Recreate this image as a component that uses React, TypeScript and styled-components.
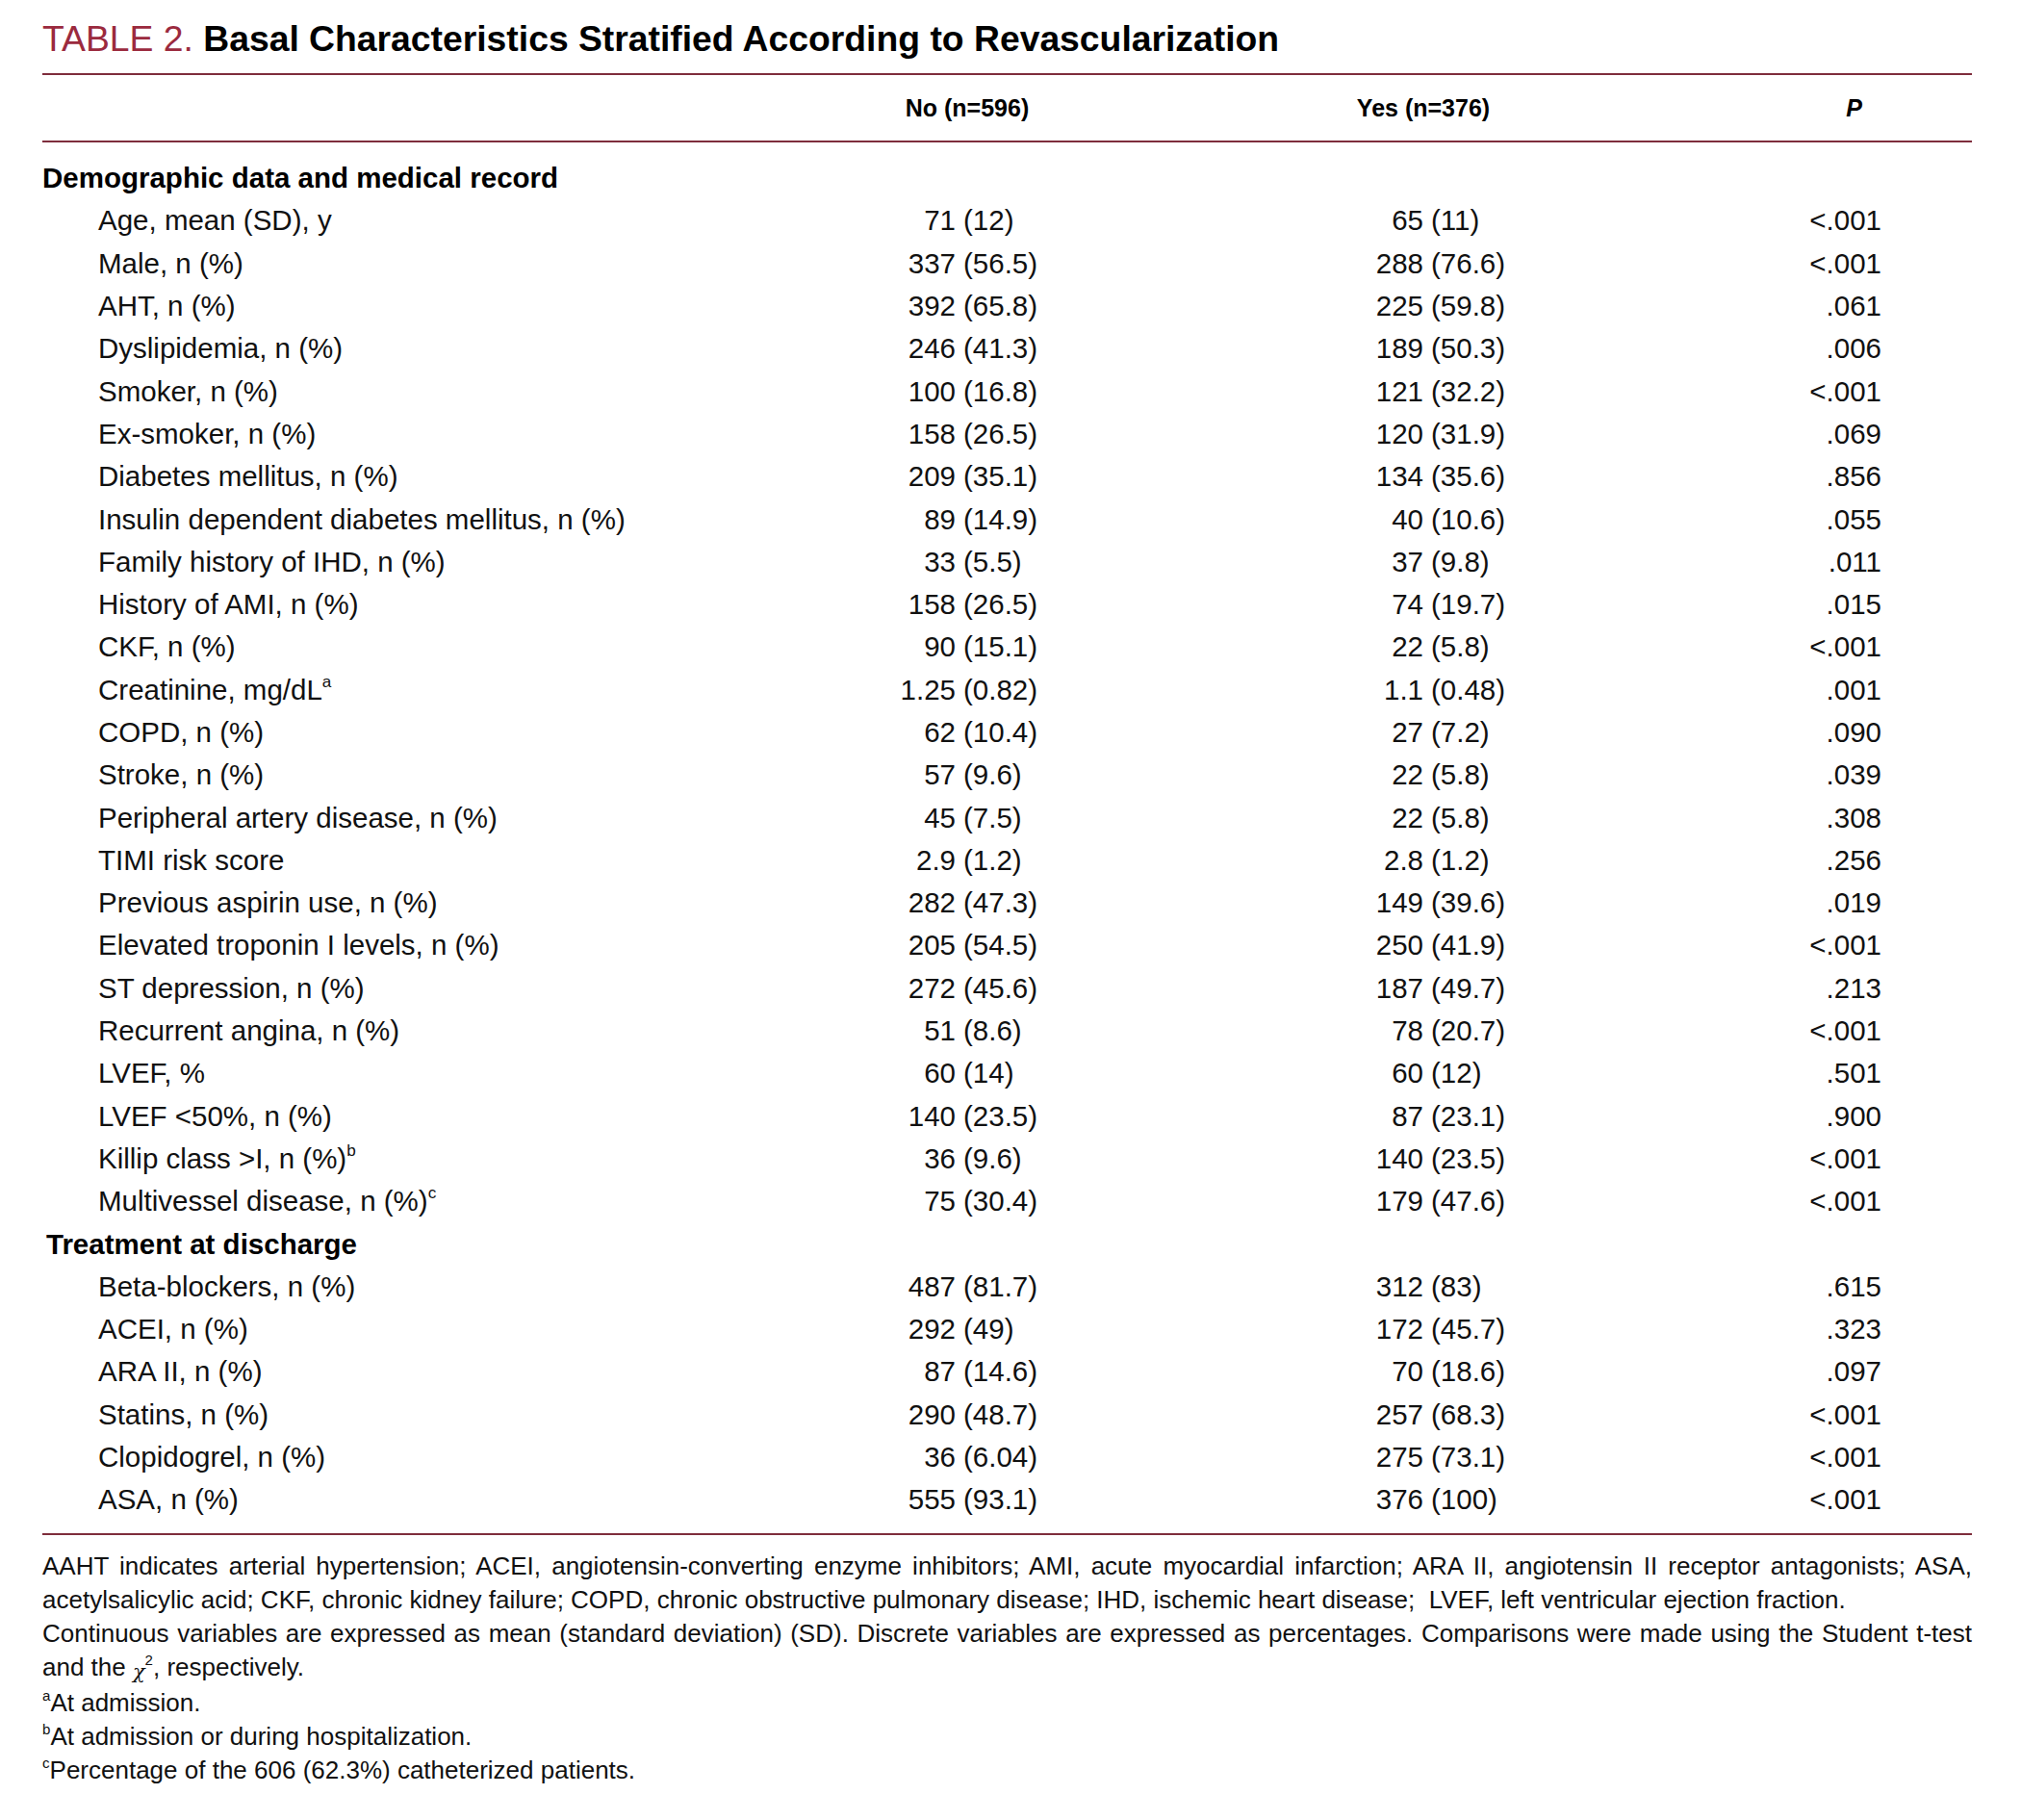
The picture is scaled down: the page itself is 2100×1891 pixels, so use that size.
import React from 'react'
import styled, { createGlobalStyle } from 'styled-components'

const GlobalStyle = createGlobalStyle`
    body {
        margin: 0;
        background: #ffffff;
        color: #111111;
        font-family: "Liberation Sans", Arial, sans-serif;
    }
`

const COLS = '716px 466px 506px 223px 1fr'

const Page = styled.div`
    width: 2005px;
    margin-left: 44px;
    padding-top: 18px;
`

const Title = styled.h1`
    margin: 0;
    font-size: 37.3px;
    line-height: 44px;
    font-weight: 700;
    white-space: nowrap;
    color: #000000;
`

const TitleLabel = styled.span`
    color: #9b2a3e;
    font-weight: 400;
`

const Rule = styled.div<{ $top?: number }>`
    height: 2px;
    background: #7e2d3c;
    margin-top: ${(p) => p.$top ?? 0}px;
`

const HeaderRow = styled.div`
    display: grid;
    grid-template-columns: ${COLS};
    height: 68px;
    align-items: center;
    font-size: 25px;
    font-weight: 700;
    color: #000000;
`

const HeadCell = styled.div<{ $align: string; $padL?: number; $padR?: number }>`
    text-align: ${(p) => p.$align};
    padding-left: ${(p) => p.$padL ?? 0}px;
    padding-right: ${(p) => p.$padR ?? 0}px;
`

const ItalicP = styled.span`
    font-style: italic;
`

const Body = styled.div`
    padding: 15px 0 12px;
`

const Row = styled.div`
    display: grid;
    grid-template-columns: ${COLS};
    height: 44.3px;
    align-items: center;
    font-size: 29.5px;
    white-space: nowrap;
`

const Label = styled.div<{ $indent: number; $bold?: boolean }>`
    padding-left: ${(p) => p.$indent}px;
    font-weight: ${(p) => (p.$bold ? 700 : 400)};
    color: ${(p) => (p.$bold ? '#000000' : 'inherit')};
`

const Value = styled.div`
    display: grid;
    grid-template-columns: 1fr 1fr;
`

const Count = styled.span`
    text-align: right;
`

const Paren = styled.span`
    text-align: left;
    padding-left: 8px;
`

const PValue = styled.div`
    text-align: right;
`

const Sup = styled.sup`
    font-size: 0.58em;
    line-height: 0;
    vertical-align: 0.75em;
`

const Notes = styled.div`
    padding-top: 15px;
    font-size: 26px;
    line-height: 35px;
`

const NoteLine = styled.div<{ $justify?: boolean }>`
    text-align: ${(p) => (p.$justify ? 'justify' : 'left')};
    text-align-last: ${(p) => (p.$justify ? 'justify' : 'auto')};
    white-space: ${(p) => (p.$justify ? 'normal' : 'nowrap')};
`

const Chi = styled.span`
    font-family: "DejaVu Serif", "Liberation Serif", serif;
    font-size: 0.8em;
    font-style: italic;
    position: relative;
    top: 0.15em;
`

type DataRow = { label: React.ReactNode; no: [string, string]; yes: [string, string]; p: string }

const demographic: DataRow[] = [
    { label: 'Age, mean (SD), y', no: ['71', '(12)'], yes: ['65', '(11)'], p: '<.001' },
    { label: 'Male, n (%)', no: ['337', '(56.5)'], yes: ['288', '(76.6)'], p: '<.001' },
    { label: 'AHT, n (%)', no: ['392', '(65.8)'], yes: ['225', '(59.8)'], p: '.061' },
    { label: 'Dyslipidemia, n (%)', no: ['246', '(41.3)'], yes: ['189', '(50.3)'], p: '.006' },
    { label: 'Smoker, n (%)', no: ['100', '(16.8)'], yes: ['121', '(32.2)'], p: '<.001' },
    { label: 'Ex-smoker, n (%)', no: ['158', '(26.5)'], yes: ['120', '(31.9)'], p: '.069' },
    { label: 'Diabetes mellitus, n (%)', no: ['209', '(35.1)'], yes: ['134', '(35.6)'], p: '.856' },
    { label: 'Insulin dependent diabetes mellitus, n (%)', no: ['89', '(14.9)'], yes: ['40', '(10.6)'], p: '.055' },
    { label: 'Family history of IHD, n (%)', no: ['33', '(5.5)'], yes: ['37', '(9.8)'], p: '.011' },
    { label: 'History of AMI, n (%)', no: ['158', '(26.5)'], yes: ['74', '(19.7)'], p: '.015' },
    { label: 'CKF, n (%)', no: ['90', '(15.1)'], yes: ['22', '(5.8)'], p: '<.001' },
    { label: <>Creatinine, mg/dL<Sup>a</Sup></>, no: ['1.25', '(0.82)'], yes: ['1.1', '(0.48)'], p: '.001' },
    { label: 'COPD, n (%)', no: ['62', '(10.4)'], yes: ['27', '(7.2)'], p: '.090' },
    { label: 'Stroke, n (%)', no: ['57', '(9.6)'], yes: ['22', '(5.8)'], p: '.039' },
    { label: 'Peripheral artery disease, n (%)', no: ['45', '(7.5)'], yes: ['22', '(5.8)'], p: '.308' },
    { label: 'TIMI risk score', no: ['2.9', '(1.2)'], yes: ['2.8', '(1.2)'], p: '.256' },
    { label: 'Previous aspirin use, n (%)', no: ['282', '(47.3)'], yes: ['149', '(39.6)'], p: '.019' },
    { label: 'Elevated troponin I levels, n (%)', no: ['205', '(54.5)'], yes: ['250', '(41.9)'], p: '<.001' },
    { label: 'ST depression, n (%)', no: ['272', '(45.6)'], yes: ['187', '(49.7)'], p: '.213' },
    { label: 'Recurrent angina, n (%)', no: ['51', '(8.6)'], yes: ['78', '(20.7)'], p: '<.001' },
    { label: 'LVEF, %', no: ['60', '(14)'], yes: ['60', '(12)'], p: '.501' },
    { label: 'LVEF <50%, n (%)', no: ['140', '(23.5)'], yes: ['87', '(23.1)'], p: '.900' },
    { label: <>Killip class &gt;I, n (%)<Sup>b</Sup></>, no: ['36', '(9.6)'], yes: ['140', '(23.5)'], p: '<.001' },
    { label: <>Multivessel disease, n (%)<Sup>c</Sup></>, no: ['75', '(30.4)'], yes: ['179', '(47.6)'], p: '<.001' },
]

const treatment: DataRow[] = [
    { label: 'Beta-blockers, n (%)', no: ['487', '(81.7)'], yes: ['312', '(83)'], p: '.615' },
    { label: 'ACEI, n (%)', no: ['292', '(49)'], yes: ['172', '(45.7)'], p: '.323' },
    { label: 'ARA II, n (%)', no: ['87', '(14.6)'], yes: ['70', '(18.6)'], p: '.097' },
    { label: 'Statins, n (%)', no: ['290', '(48.7)'], yes: ['257', '(68.3)'], p: '<.001' },
    { label: 'Clopidogrel, n (%)', no: ['36', '(6.04)'], yes: ['275', '(73.1)'], p: '<.001' },
    { label: 'ASA, n (%)', no: ['555', '(93.1)'], yes: ['376', '(100)'], p: '<.001' },
]

const Cell: React.FC<{ v: [string, string] }> = ({ v }) => (
    <Value>
        <Count>{v[0]}</Count>
        <Paren>{v[1]}</Paren>
    </Value>
)

const Section: React.FC<{ title: string; indent: number; rows: DataRow[] }> = ({ title, indent, rows }) => (
    <>
        <Row>
            <Label $indent={indent} $bold>{title}</Label>
        </Row>
        {rows.map((r, i) => (
            <Row key={i}>
                <Label $indent={58}>{r.label}</Label>
                <Cell v={r.no} />
                <Cell v={r.yes} />
                <PValue>{r.p}</PValue>
            </Row>
        ))}
    </>
)

export const App: React.FC = () => {
    return (
        <>
            <GlobalStyle />
            <Page>
                <Title>
                    <TitleLabel>TABLE 2.</TitleLabel> Basal Characteristics Stratified According to Revascularization
                </Title>
                <Rule $top={14} />
                <HeaderRow>
                    <div />
                    <HeadCell $align="center" $padL={24}>No (n=596)</HeadCell>
                    <HeadCell $align="center">Yes (n=376)</HeadCell>
                    <HeadCell $align="right" $padR={20}><ItalicP>P</ItalicP></HeadCell>
                </HeaderRow>
                <Rule />
                <Body>
                    <Section title="Demographic data and medical record" indent={0} rows={demographic} />
                    <Section title="Treatment at discharge" indent={4} rows={treatment} />
                </Body>
                <Rule />
                <Notes>
                    <NoteLine $justify>
                        AAHT indicates arterial hypertension; ACEI, angiotensin-converting enzyme inhibitors; AMI, acute myocardial infarction; ARA II, angiotensin II receptor antagonists; ASA,
                    </NoteLine>
                    <NoteLine>
                        acetylsalicylic acid; CKF, chronic kidney failure; COPD, chronic obstructive pulmonary disease; IHD, ischemic heart disease;&nbsp; LVEF, left ventricular ejection fraction.
                    </NoteLine>
                    <NoteLine $justify>
                        Continuous variables are expressed as mean (standard deviation) (SD). Discrete variables are expressed as percentages. Comparisons were made using the Student t-test
                    </NoteLine>
                    <NoteLine>
                        and the <Chi>χ</Chi><Sup>2</Sup>, respectively.
                    </NoteLine>
                    <NoteLine><Sup>a</Sup>At admission.</NoteLine>
                    <NoteLine><Sup>b</Sup>At admission or during hospitalization.</NoteLine>
                    <NoteLine><Sup>c</Sup>Percentage of the 606 (62.3%) catheterized patients.</NoteLine>
                </Notes>
            </Page>
        </>
    )
}

export default App
